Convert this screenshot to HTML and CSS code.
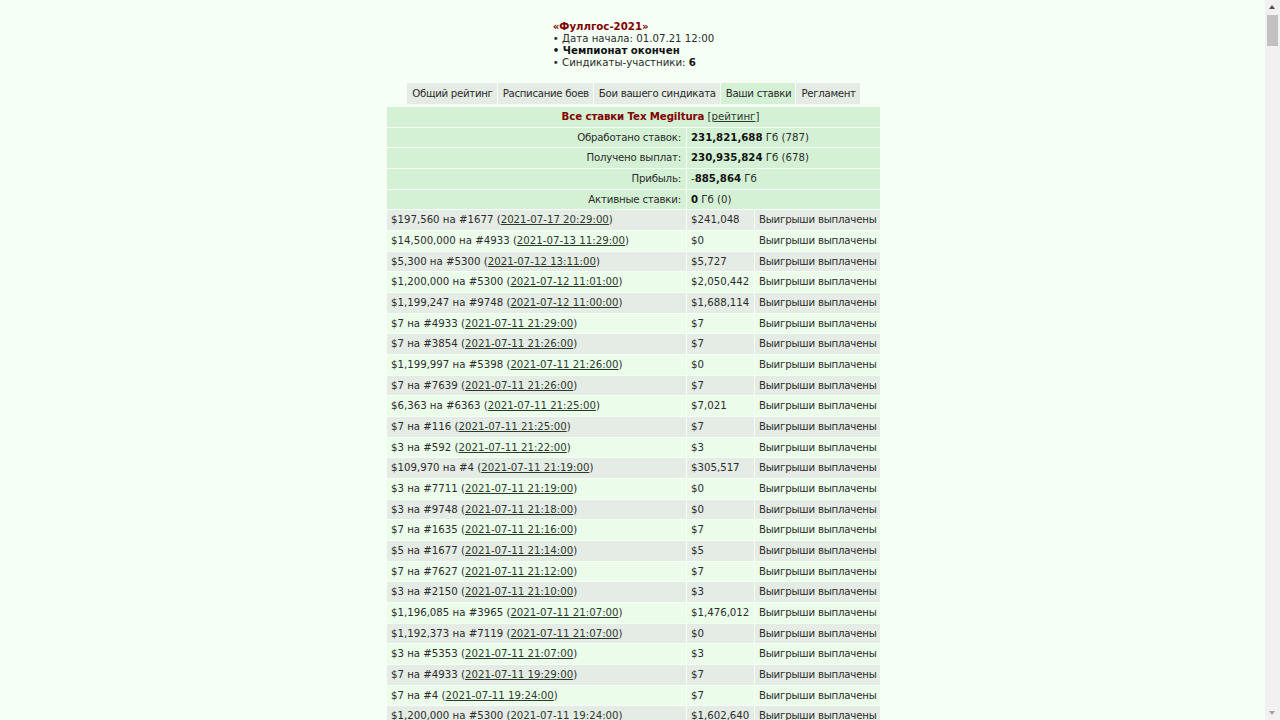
FILE: index.html
```html
<!DOCTYPE html>
<html lang="ru">
<head>
  <meta charset="UTF-8">
  <meta name="viewport" content="width=device-width, initial-scale=1.0">
  <title>Фуллгос-2021 — ставки</title>
  <link rel="stylesheet" href="styles.css">
</head>
<body>
  <div class="head-wrap">
    <div class="head">
      <div class="champ-title">«Фуллгос-2021»</div>
      <div>• Дата начала: 01.07.21 12:00</div>
      <div><b>• Чемпионат окончен</b></div>
      <div>• Синдикаты-участники: <b>6</b></div>
    </div>
  </div>

  <!-- Меню чемпионата -->
  <div class="tabs">
    <a class="tab" href="#">Общий рейтинг</a>
    <a class="tab" href="#">Расписание боев</a>
    <a class="tab" href="#">Бои вашего синдиката</a>
    <a class="tab active" href="#">Ваши ставки</a>
    <a class="tab" href="#">Регламент</a>
  </div>

  <table class="bets">
    <colgroup>
      <col class="c-bet">
      <col class="c-win">
      <col class="c-status">
    </colgroup>
    <tr class="sum">
      <td colspan="3" class="caption"><span class="who">Все ставки Tex Megiltura</span> [<a href="#">рейтинг</a>]</td>
    </tr>
    <tr class="sum">
      <td class="label">Обработано ставок:</td>
      <td colspan="2"><b>231,821,688</b> Гб (787)</td>
    </tr>
    <tr class="sum">
      <td class="label">Получено выплат:</td>
      <td colspan="2"><b>230,935,824</b> Гб (678)</td>
    </tr>
    <tr class="sum">
      <td class="label">Прибыль:</td>
      <td colspan="2">-<b>885,864</b> Гб</td>
    </tr>
    <tr class="sum">
      <td class="label">Активные ставки:</td>
      <td colspan="2"><b>0</b> Гб (0)</td>
    </tr>
    <tbody id="betList">
      <tr><td>$197,560 на #1677 (<a href="#">2021-07-17 20:29:00</a>)</td><td>$241,048</td><td class="st">Выигрыши выплачены</td></tr>
      <tr><td>$14,500,000 на #4933 (<a href="#">2021-07-13 11:29:00</a>)</td><td>$0</td><td class="st">Выигрыши выплачены</td></tr>
      <tr><td>$5,300 на #5300 (<a href="#">2021-07-12 13:11:00</a>)</td><td>$5,727</td><td class="st">Выигрыши выплачены</td></tr>
      <tr><td>$1,200,000 на #5300 (<a href="#">2021-07-12 11:01:00</a>)</td><td>$2,050,442</td><td class="st">Выигрыши выплачены</td></tr>
      <tr><td>$1,199,247 на #9748 (<a href="#">2021-07-12 11:00:00</a>)</td><td>$1,688,114</td><td class="st">Выигрыши выплачены</td></tr>
      <tr><td>$7 на #4933 (<a href="#">2021-07-11 21:29:00</a>)</td><td>$7</td><td class="st">Выигрыши выплачены</td></tr>
      <tr><td>$7 на #3854 (<a href="#">2021-07-11 21:26:00</a>)</td><td>$7</td><td class="st">Выигрыши выплачены</td></tr>
      <tr><td>$1,199,997 на #5398 (<a href="#">2021-07-11 21:26:00</a>)</td><td>$0</td><td class="st">Выигрыши выплачены</td></tr>
      <tr><td>$7 на #7639 (<a href="#">2021-07-11 21:26:00</a>)</td><td>$7</td><td class="st">Выигрыши выплачены</td></tr>
      <tr><td>$6,363 на #6363 (<a href="#">2021-07-11 21:25:00</a>)</td><td>$7,021</td><td class="st">Выигрыши выплачены</td></tr>
      <tr><td>$7 на #116 (<a href="#">2021-07-11 21:25:00</a>)</td><td>$7</td><td class="st">Выигрыши выплачены</td></tr>
      <tr><td>$3 на #592 (<a href="#">2021-07-11 21:22:00</a>)</td><td>$3</td><td class="st">Выигрыши выплачены</td></tr>
      <tr><td>$109,970 на #4 (<a href="#">2021-07-11 21:19:00</a>)</td><td>$305,517</td><td class="st">Выигрыши выплачены</td></tr>
      <tr><td>$3 на #7711 (<a href="#">2021-07-11 21:19:00</a>)</td><td>$0</td><td class="st">Выигрыши выплачены</td></tr>
      <tr><td>$3 на #9748 (<a href="#">2021-07-11 21:18:00</a>)</td><td>$0</td><td class="st">Выигрыши выплачены</td></tr>
      <tr><td>$7 на #1635 (<a href="#">2021-07-11 21:16:00</a>)</td><td>$7</td><td class="st">Выигрыши выплачены</td></tr>
      <tr><td>$5 на #1677 (<a href="#">2021-07-11 21:14:00</a>)</td><td>$5</td><td class="st">Выигрыши выплачены</td></tr>
      <tr><td>$7 на #7627 (<a href="#">2021-07-11 21:12:00</a>)</td><td>$7</td><td class="st">Выигрыши выплачены</td></tr>
      <tr><td>$3 на #2150 (<a href="#">2021-07-11 21:10:00</a>)</td><td>$3</td><td class="st">Выигрыши выплачены</td></tr>
      <tr><td>$1,196,085 на #3965 (<a href="#">2021-07-11 21:07:00</a>)</td><td>$1,476,012</td><td class="st">Выигрыши выплачены</td></tr>
      <tr><td>$1,192,373 на #7119 (<a href="#">2021-07-11 21:07:00</a>)</td><td>$0</td><td class="st">Выигрыши выплачены</td></tr>
      <tr><td>$3 на #5353 (<a href="#">2021-07-11 21:07:00</a>)</td><td>$3</td><td class="st">Выигрыши выплачены</td></tr>
      <tr><td>$7 на #4933 (<a href="#">2021-07-11 19:29:00</a>)</td><td>$7</td><td class="st">Выигрыши выплачены</td></tr>
      <tr><td>$7 на #4 (<a href="#">2021-07-11 19:24:00</a>)</td><td>$7</td><td class="st">Выигрыши выплачены</td></tr>
      <tr><td>$1,200,000 на #5300 (<a href="#">2021-07-11 19:24:00</a>)</td><td>$1,602,640</td><td class="st">Выигрыши выплачены</td></tr>
    </tbody>
  </table>

  <!-- полоса прокрутки окна -->
  <div class="scrollbar">
    <span class="arrow up"></span>
    <span class="thumb"></span>
    <span class="arrow down"></span>
  </div>

  <script>
    // Остальные (более ранние) ставки — всего их 787
    const total = 787;
    const list = document.getElementById("betList");
    const fighters = [4, 116, 592, 1635, 1677, 2150, 3854, 3965, 4933, 5300, 5353, 5398, 6363, 7119, 7627, 7639, 7711, 9748];
    let seed = 17;
    const rnd = () => (seed = (seed * 16807) % 2147483647) / 2147483647;
    const fmt = n => n.toLocaleString('en-US');
    const pad = n => String(n).padStart(2, '0');

    let time = new Date(2021, 6, 11, 19, 24);
    for (let i = list.rows.length; i < total; i++) {
      time = new Date(time.getTime() - Math.floor(rnd() * 40 + 1) * 60000);
      const big = rnd() < 0.08;
      const stake = big ? Math.floor(rnd() * 1200000) : [3, 5, 7][Math.floor(rnd() * 3)];
      const win = rnd() < 0.86 ? (big ? Math.floor(stake * (1.1 + rnd() * 0.5)) : stake) : 0;
      const d = `${time.getFullYear()}-${pad(time.getMonth() + 1)}-${pad(time.getDate())} ${pad(time.getHours())}:${pad(time.getMinutes())}:00`;
      const tr = list.insertRow();
      tr.innerHTML = `<td>$${fmt(stake)} на #${fighters[Math.floor(rnd() * fighters.length)]} (<a href="#">${d}</a>)</td><td>$${fmt(win)}</td><td class="st">Выигрыши выплачены</td>`;
    }
  </script>
</body>
</html>
```

FILE: styles.css
```css
body {
  margin: 0;
  padding-right: 13px;
  background: #f5fff5;
  font-family: "DejaVu Sans", Verdana, sans-serif;
  font-size: 10.2px;
  color: #2b2b2b;
}
a {
  color: #2c3a2c;
}
b {
  color: #111;
}
.head-wrap {
  text-align: center;
  padding-top: 21px;
}
.head {
  display: inline-block;
  text-align: left;
  line-height: 12px;
}
.champ-title {
  color: #800000;
  font-weight: bold;
}
.tabs {
  display: flex;
  justify-content: center;
  gap: 1px;
  margin-top: 14px;
}
.tab {
  display: block;
  background: #e5ebe5;
  padding: 0 4px 0 5px;
  line-height: 21px;
  color: #2b2b2b;
  text-decoration: none;
  letter-spacing: -0.3px;
}
.tab.active {
  background: #d5f1d5;
}
.bets {
  margin: 2px auto 0;
  border-spacing: 1px;
  table-layout: fixed;
  width: 495px;
}
.c-bet {
  width: 299px;
}
.c-win {
  width: 67px;
}
.c-status {
  width: 125px;
}
.bets td {
  padding: 3px 4px;
  line-height: 13.67px;
  white-space: nowrap;
}
.bets .st {
  letter-spacing: -0.2px;
}
.sum td {
  background: #d5f1d5;
}
.sum .label {
  text-align: right;
  padding-right: 5px;
  letter-spacing: -0.2px;
}
.bets .caption {
  text-align: center;
  padding-left: 58px;
}
.who {
  color: #800000;
  font-weight: bold;
  letter-spacing: -0.1px;
}
#betList tr:nth-child(odd) td {
  background: #e5ebe5;
}
#betList tr:nth-child(even) td {
  background: #ebfceb;
}

/* полоса прокрутки поверх правого края */
.scrollbar {
  position: fixed;
  top: 0;
  right: 0;
  width: 15px;
  height: 100%;
  background: #f1f1f1;
}
.thumb {
  position: absolute;
  top: 15px;
  left: 2px;
  width: 11px;
  height: 31px;
  background: #c1c1c1;
}
.arrow {
  position: absolute;
  left: 4px;
  width: 0;
  height: 0;
  border-left: 3.5px solid transparent;
  border-right: 3.5px solid transparent;
}
.arrow.up {
  top: 5px;
  border-bottom: 4px solid #505050;
}
.arrow.down {
  bottom: 5px;
  border-top: 4px solid #a3a3a3;
}
```
